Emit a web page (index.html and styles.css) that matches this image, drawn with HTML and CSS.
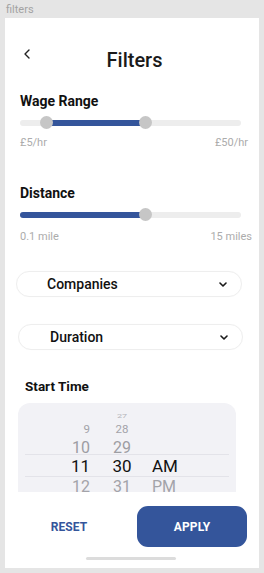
FILE: index.html
```html
<!DOCTYPE html>
<html lang="en">
<head>
<meta charset="utf-8">
<title>filters</title>
<link rel="stylesheet" href="styles.css">
</head>
<body>
<div class="page-label">filters</div>
<main class="card">
  <header class="header">
    <svg class="back" width="6" height="10" viewBox="0 0 6 10"><path d="M5 1 L1 5 L5 9" fill="none" stroke="#222" stroke-width="1.4" stroke-linecap="round" stroke-linejoin="round"/></svg>
    <h1 class="title">Filters</h1>
    <span class="spacer"></span>
  </header>

  <h2 class="section-title wage">Wage Range</h2>
  <div class="slider s1">
    <div class="track"></div>
    <div class="fill" style="left:27px;width:99px"></div>
    <div class="thumb" style="left:20px"></div>
    <div class="thumb" style="left:119px"></div>
  </div>
  <div class="range-labels wage-labels"><span>£5/hr</span><span>£50/hr</span></div>

  <h2 class="section-title distance">Distance</h2>
  <div class="slider s2">
    <div class="track"></div>
    <div class="fill" style="left:0;width:126px"></div>
    <div class="thumb" style="left:119px"></div>
  </div>
  <div class="range-labels dist-labels"><span>0.1 mile</span><span>15 miles</span></div>

  <div class="select companies">
    <span>Companies</span>
    <svg width="8" height="5" viewBox="0 0 8 5"><path d="M1 1 L4 4 L7 1" fill="none" stroke="#1a1a1a" stroke-width="1.6" stroke-linecap="round" stroke-linejoin="round"/></svg>
  </div>
  <div class="select duration">
    <span>Duration</span>
    <svg width="8" height="5" viewBox="0 0 8 5"><path d="M1 1 L4 4 L7 1" fill="none" stroke="#1a1a1a" stroke-width="1.6" stroke-linecap="round" stroke-linejoin="round"/></svg>
  </div>

  <h2 class="section-title start">Start Time</h2>
  <div class="picker">
    <div class="prow r1"><span class="h"></span><span class="m"><i>27</i></span><span class="ap"></span></div>
    <div class="prow r2"><span class="h">9</span><span class="m">28</span><span class="ap"></span></div>
    <div class="prow r3"><span class="h">10</span><span class="m">29</span><span class="ap"></span></div>
    <div class="prow r4"><span class="h">11</span><span class="m">30</span><span class="ap">AM</span></div>
    <div class="prow r5"><span class="h">12</span><span class="m">31</span><span class="ap">PM</span></div>
  </div>

  <div class="actions">
    <button class="reset">RESET</button>
    <button class="apply">APPLY</button>
  </div>
  <div class="home-bar"></div>
</main>
</body>
</html>
```

FILE: styles.css
```css
* { box-sizing: border-box; }
body {
  margin: 0;
  background: #e5e5e5;
  font-family: Roboto, "Noto Sans", Arial, sans-serif;
  color: #111;
}
.page-label {
  height: 18px;
  line-height: 20px;
  font-size: 11px;
  color: #a3a3a3;
  padding-left: 6px;
}
.card {
  margin: 0 5px;
  height: 550px;
  background: #fff;
  display: flex;
  flex-direction: column;
  overflow: hidden;
}
.header {
  margin-top: 27px;
  height: 30px;
  display: flex;
  align-items: center;
  padding: 0 19px;
}
.back { align-self: flex-start; margin-top: 4px; flex: none; }
.title {
  flex: 1;
  margin: 0;
  text-align: center;
  padding-left: 5px;
  font-size: 20px;
  font-weight: 500;
  line-height: 30px;
  color: #1a1a1a;
}
.spacer { width: 6px; flex: none; }

.section-title {
  margin: 0;
  padding-left: 15px;
  font-size: 14px;
  font-weight: 700;
  line-height: 16px;
  color: #111;
}
.section-title.wage { margin-top: 18px; }
.section-title.distance { margin-top: 35px; }
.section-title.start { margin-top: 28px; padding-left: 20px; font-size: 13.5px; }

.slider {
  position: relative;
  height: 13px;
  margin: 7px 18px 0 15px;
}
.track {
  position: absolute;
  left: 0; right: 0; top: 4px;
  height: 6px;
  border-radius: 3px;
  background: #ededed;
}
.fill {
  position: absolute;
  top: 4px;
  height: 6px;
  border-radius: 3px;
  background: #34559b;
}
.thumb {
  position: absolute;
  top: 0;
  width: 13px;
  height: 13px;
  border-radius: 50%;
  background: #c6c6c6;
}

.range-labels {
  display: flex;
  justify-content: space-between;
  font-size: 11px;
  line-height: 14px;
  color: #acacac;
  padding-left: 15px;
}
.wage-labels { margin-top: 7px; padding-right: 11px; }
.dist-labels { margin-top: 9px; padding-right: 7px; }

.select {
  height: 26px;
  border: 1px solid #eeeeee;
  border-radius: 13px;
  display: flex;
  align-items: center;
  justify-content: space-between;
  font-size: 14px;
  font-weight: 500;
  color: #111;
  margin-top: 27px;
  box-shadow: 0 0 1px rgba(0,0,0,0.04);
}
.select.companies { margin-left: 11px; width: 226px; padding: 0 14px 0 30px; }
.select.duration { margin-left: 13px; width: 225px; padding: 0 14px 0 31px; }

.picker {
  margin: 9px 0 0 13px;
  width: 218px;
  height: 89px;
  flex: none;
  background: #f2f2f6;
  border-radius: 12px 12px 0 0;
  overflow: hidden;
  padding-top: 6px;
}
.prow {
  display: grid;
  grid-template-columns: 65px 62px 1fr;
  margin: 0 7px;
  color: #9d9da3;
}
.prow .h { text-align: right; }
.prow .m { text-align: center; padding-left: 2px; }
.prow i { font-style: normal; display: inline-block; transform: scaleY(0.6); }
.r1 { height: 14px; line-height: 14px; font-size: 9px; color: #b3b3b8; }
.r2 { height: 13px; line-height: 13px; font-size: 11.5px; color: #a3a3a9; }
.r3 { height: 18px; line-height: 23px; font-size: 16px; }
.r4 {
  height: 23px;
  border-top: 1px solid #e3e3e9;
  border-bottom: 1px solid #e3e3e9;
  padding-top: 2px;
  line-height: 18px;
  font-size: 17px;
  color: #111;
}
.r5 { line-height: 20px; font-size: 16px; color: #a3a3a9; }

.actions {
  margin-top: 14px;
  display: grid;
  grid-template-columns: 1fr 110px;
  padding-right: 12px;
  height: 41px;
  flex: none;
}
.actions button {
  font-family: Roboto, Arial, sans-serif;
  font-size: 12px;
  font-weight: 700;
  border: none;
  padding: 0;
  letter-spacing: 0.1px;
}
.reset {
  background: none;
  color: #34559b;
  padding-right: 4px !important;
}
.apply {
  background: #34559b;
  color: #fff;
  border-radius: 11px;
}
.home-bar {
  margin: 10px 0 0 81px;
  width: 90px;
  height: 3px;
  border-radius: 2px;
  background: #dcdcdc;
  flex: none;
}
```
